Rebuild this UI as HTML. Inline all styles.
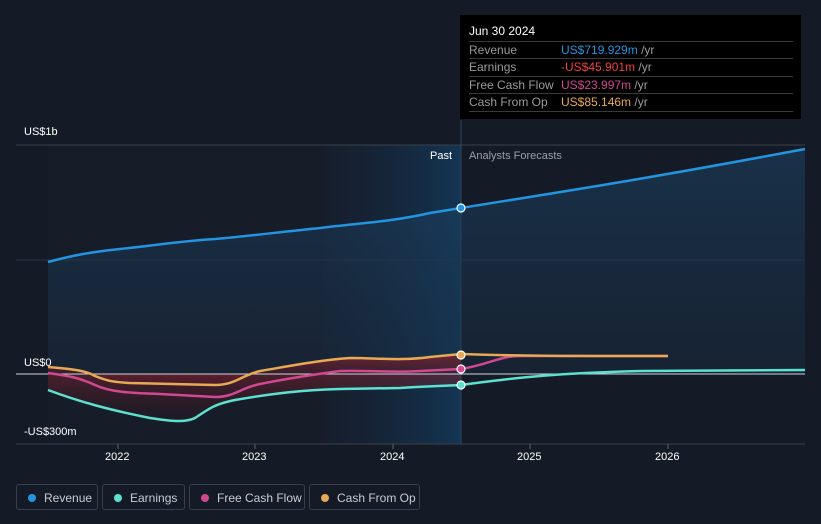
<!DOCTYPE html>
<html><head><meta charset="utf-8"><style>
body{margin:0;background:#151b26;font-family:"Liberation Sans",sans-serif;}
.wrap{position:relative;width:821px;height:524px;overflow:hidden;background:#151b26;}
svg{position:absolute;left:0;top:0}
.tip{position:absolute;left:460px;top:15px;width:341px;height:104px;background:#000;color:#fff;font-size:12px;}
.tip .d{position:absolute;left:9px;top:9px;font-size:12px}
.row{position:absolute;left:9px;width:324px;height:17px;border-top:1px solid #3a3a3a;line-height:17px;color:#9a9a9a}
.row span{position:absolute;left:92px}
.row i{font-style:normal;color:#9a9a9a}
.leg{position:absolute;top:484px;height:26px;border:1px solid #3a404b;border-radius:3px;color:#c8ccd2;font-size:12px;line-height:26px;box-sizing:border-box}
.leg b{position:absolute;left:11px;top:9px;width:8px;height:8px;border-radius:50%}
.leg span{position:absolute;left:27px}
.lab{position:absolute;color:#fff;font-size:11px}
</style></head><body><div class="wrap">
<svg width="821" height="524">
<defs>
<linearGradient id="fc" x1="0" x2="1"><stop offset="0" stop-color="#17253a" stop-opacity="0.3"/><stop offset="1" stop-color="#133553"/></linearGradient>
<linearGradient id="rv" x1="0" y1="0" x2="0" y2="1"><stop offset="0" stop-color="#1c4366" stop-opacity="0.8"/><stop offset="1" stop-color="#1a3048" stop-opacity="0.5"/></linearGradient>
<linearGradient id="neg" x1="0" y1="0" x2="0" y2="1"><stop offset="0" stop-color="#7a2230" stop-opacity="0.9"/><stop offset="1" stop-color="#3a1620" stop-opacity="0.3"/></linearGradient>
</defs>
<rect x="48" y="145" width="275" height="299" fill="#161c28"/>
<rect x="323" y="145" width="138" height="299" fill="url(#fc)"/>
<line x1="461" y1="120" x2="461" y2="444" stroke="#2d4660"/>
<line x1="16" y1="145" x2="805" y2="145" stroke="#3a404b"/>
<line x1="16" y1="260" x2="805" y2="260" stroke="#2a3240"/>
<path d="M48,262 C70,256 90,252 120,249 C160,245 180,241 215,239 C250,236 280,232 320,228 C360,223 390,222 430,213 L461,208 C560,192 640,180 805,149 L805,374 L48,374Z" fill="url(#rv)" opacity="0.7"/>
<path d="M48,367 C70,369 85,370 95,376 C110,382 115,382 130,383 L215,385 C235,385 240,376 260,371 C290,366 320,360 350,358 C380,358 400,361 430,357 L461,354 L461,374 L48,374Z" fill="url(#neg)"/>
<path d="M48,390 C80,402 110,410 150,418 C170,421 185,423 195,418 C210,408 215,404 235,400 C270,394 300,390 340,389 L400,388 C430,386 445,386 461,385 L461,374 L48,374Z" fill="url(#neg)" opacity="0.6"/>
<line x1="16" y1="374" x2="805" y2="374" stroke="#d0d4da" stroke-width="1"/>
<line x1="16" y1="444" x2="805" y2="444" stroke="#3a404b"/>
<g stroke="#5a606b"><line x1="118" y1="444" x2="118" y2="449"/><line x1="255" y1="444" x2="255" y2="449"/><line x1="393" y1="444" x2="393" y2="449"/><line x1="530" y1="444" x2="530" y2="449"/><line x1="668" y1="444" x2="668" y2="449"/></g>
<path d="M48,262 C70,256 90,252 120,249 C160,245 180,241 215,239 C250,236 280,232 320,228 C360,223 390,222 430,213 L461,208 C560,192 640,180 805,149" fill="none" stroke="#2394e0" stroke-width="2.5"/>
<path d="M48,390 C80,402 110,410 150,418 C170,421 185,423 195,418 C210,408 215,404 235,400 C270,394 300,390 340,389 L400,388 C430,386 445,386 461,385 C520,377 560,373 640,371 L805,370" fill="none" stroke="#5ee0cf" stroke-width="2.5"/>
<path d="M48,373 C70,376 80,378 95,385 C110,392 130,393 160,394 L215,397 C235,397 240,388 260,384 C290,378 310,375 340,371 C370,370 390,373 420,371 L461,369 C490,364 500,356 520,356 L668,356" fill="none" stroke="#d04890" stroke-width="2.5"/>
<path d="M48,367 C70,369 85,370 95,376 C110,382 115,382 130,383 L215,385 C235,385 240,376 260,371 C290,366 320,360 350,358 C380,358 400,361 430,357 L461,354 C520,356 560,356 668,356" fill="none" stroke="#e8a955" stroke-width="2.5"/>
<circle cx="461" cy="208" r="4" fill="#2394e0" stroke="#fff" stroke-width="1.2"/>
<circle cx="461" cy="385" r="4" fill="#5ee0cf" stroke="#fff" stroke-width="1.2"/>
<circle cx="461" cy="369" r="4" fill="#d04890" stroke="#fff" stroke-width="1.2"/>
<circle cx="461" cy="355" r="4" fill="#e8a955" stroke="#fff" stroke-width="1.2"/>
</svg>
<div class="lab" style="left:24px;top:126px">US$1b</div>
<div class="lab" style="left:24px;top:357px">US$0</div>
<div class="lab" style="left:24px;top:426px">-US$300m</div>
<div class="lab" style="left:430px;top:150px">Past</div>
<div class="lab" style="left:469px;top:150px;color:#9a9ea6">Analysts Forecasts</div>
<div class="lab" style="left:105px;top:451px">2022</div>
<div class="lab" style="left:242px;top:451px">2023</div>
<div class="lab" style="left:380px;top:451px">2024</div>
<div class="lab" style="left:517px;top:451px">2025</div>
<div class="lab" style="left:655px;top:451px">2026</div>
<div class="tip"><div class="d">Jun 30 2024</div>
<div class="row" style="top:26px">Revenue<span style="color:#2394e0">US$719.929m <i>/yr</i></span></div>
<div class="row" style="top:43px">Earnings<span style="color:#f04040">-US$45.901m <i>/yr</i></span></div>
<div class="row" style="top:61px">Free Cash Flow<span style="color:#d04890">US$23.997m <i>/yr</i></span></div>
<div class="row" style="top:78px;border-bottom:1px solid #3a3a3a">Cash From Op<span style="color:#e8a955">US$85.146m <i>/yr</i></span></div>
</div>
<div class="leg" style="left:16px;width:82px"><b style="background:#2394e0"></b><span>Revenue</span></div>
<div class="leg" style="left:102px;width:83px"><b style="background:#5ee0cf"></b><span>Earnings</span></div>
<div class="leg" style="left:189px;width:116px"><b style="background:#d04890"></b><span>Free Cash Flow</span></div>
<div class="leg" style="left:309px;width:111px"><b style="background:#e8a955"></b><span>Cash From Op</span></div>
</div></body></html>
